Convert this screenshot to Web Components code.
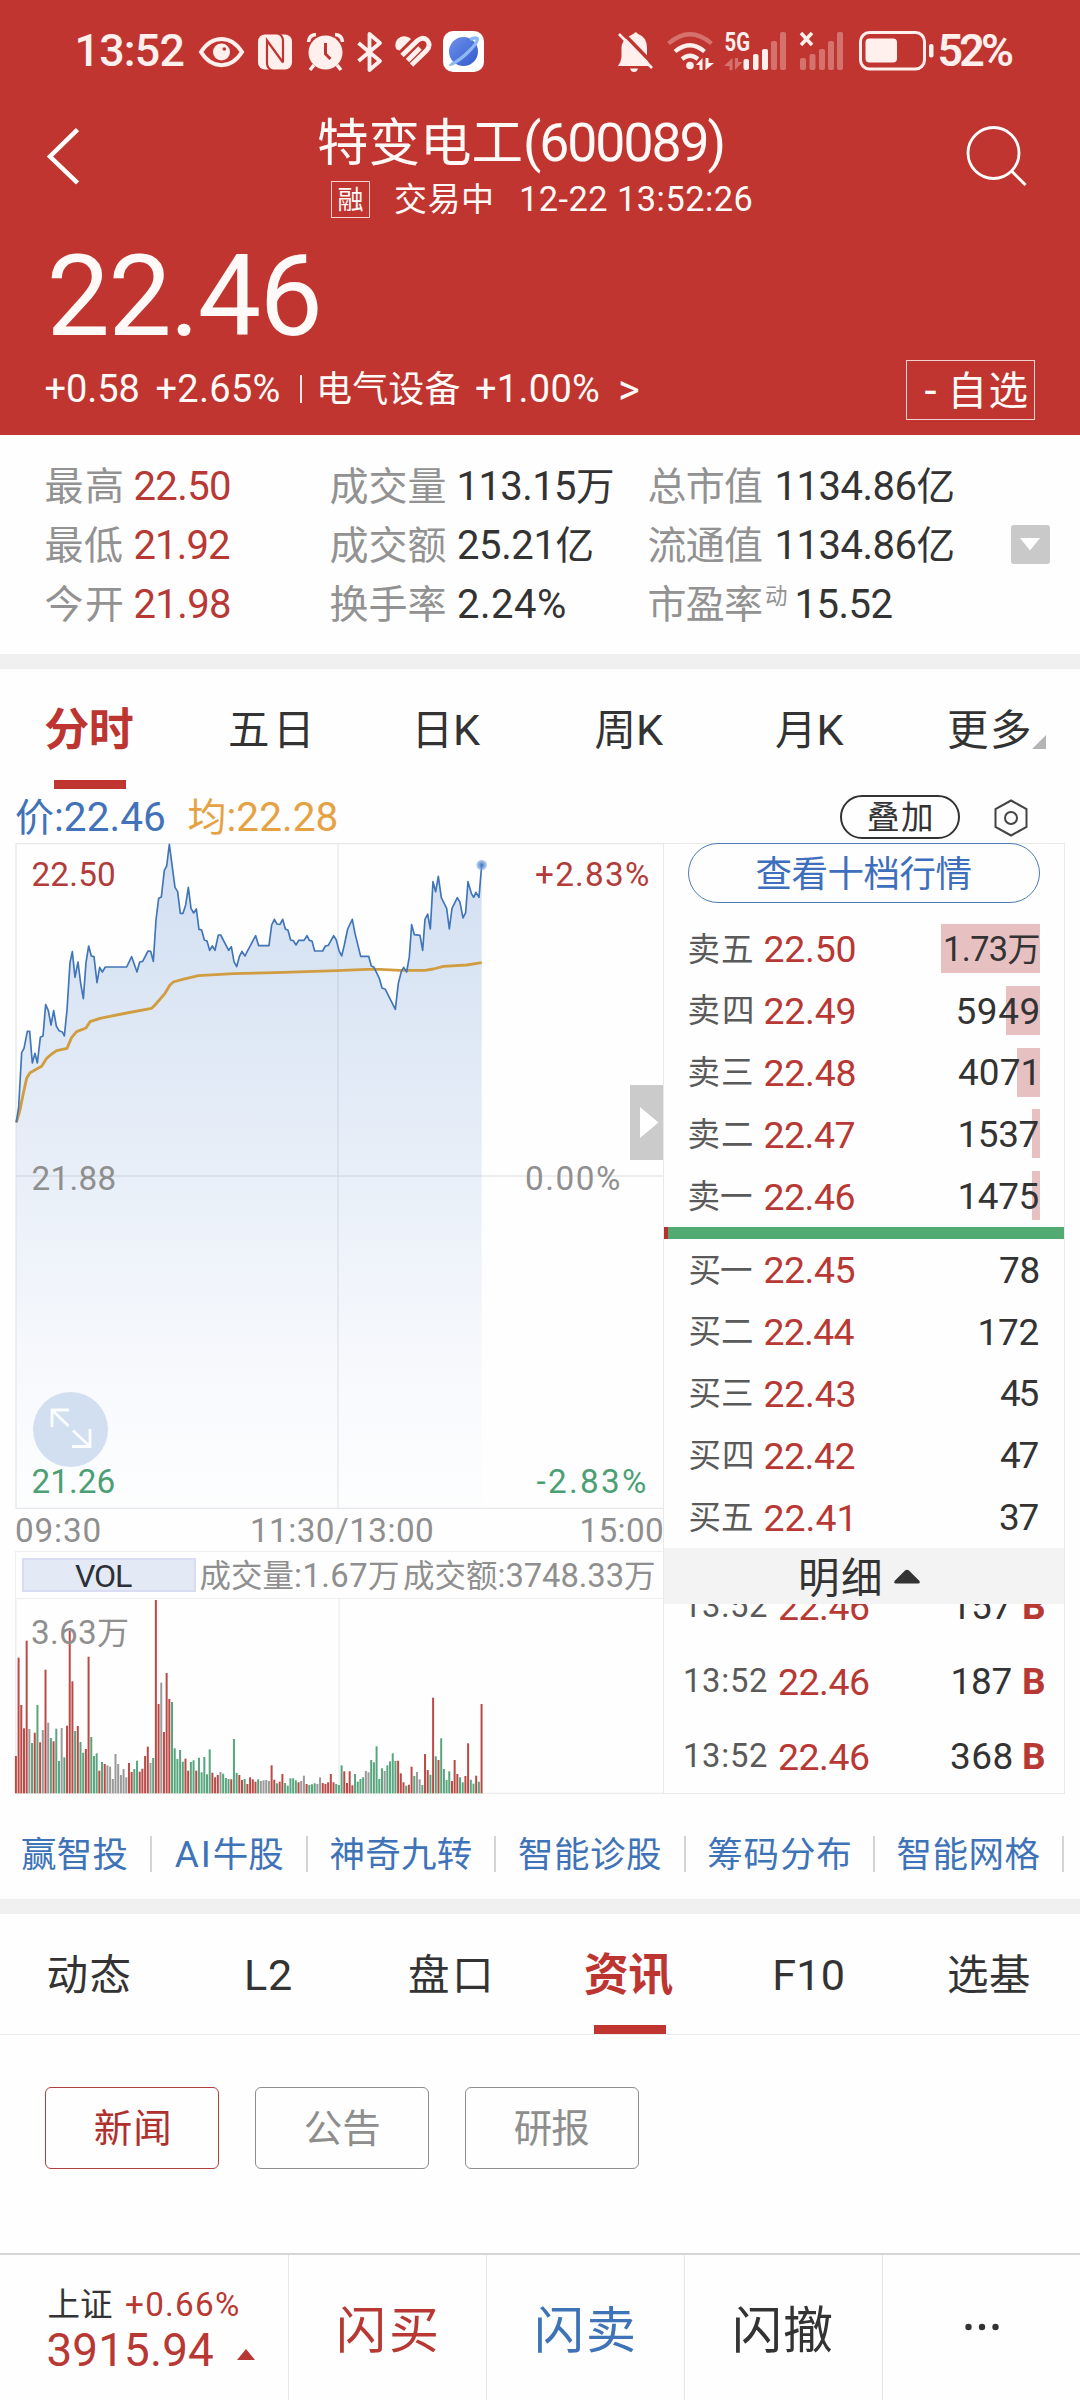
<!DOCTYPE html>
<html lang="zh-CN">
<head>
<meta charset="utf-8">
<title>特变电工(600089)</title>
<style>
html,body{margin:0;padding:0}
body{width:1080px;height:2400px;background:#fefefe;overflow:hidden;
  font-family:Roboto,"Noto Sans CJK SC",sans-serif;color:#333;
  --red:#b83834;--brand:#c0352f;--blue:#3f73b8;--grey:#929292}
</style>
</head>
<body>
<stock-page></stock-page>
<script>
const define = (name, html, setup) => {
  const tpl = document.createElement('template');
  tpl.innerHTML = html;
  customElements.define(name, class extends HTMLElement {
    connectedCallback() {
      if (this.shadowRoot) return;
      const root = this.attachShadow({ mode: 'open' });
      root.appendChild(tpl.content.cloneNode(true));
      if (setup) setup.call(this, root);
    }
  });
};

/* Text fitted to an ink width: t = text, s = size, w = width, b = weight, c = colour */
const FAMILY = 'Roboto,"Noto Sans CJK SC",sans-serif';
const LATIN = 1.04;
const ctx = document.createElement('canvas').getContext('2d');
const isCjk = ch => ch.charCodeAt(0) > 0x2e7f;
customElements.define('q-text', class extends HTMLElement {
  connectedCallback() {
    if (this.shadowRoot) return;
    const t = this.getAttribute('t'), s = +this.getAttribute('s'), w = +this.getAttribute('w');
    const weight = this.getAttribute('b') || 400, color = this.getAttribute('c');
    const runs = t.match(/[\u2e80-\uffff]+|[^\u2e80-\uffff]+/g);
    const hasCjk = [...t].some(isCjk), hasLatin = [...t].some(c => !isCjk(c));
    const size = c => isCjk(c) ? s : s * LATIN;
    const m = (str, sz) => { ctx.font = `${weight} ${sz}px ${FAMILY}`; return ctx.measureText(str); };
    let natural = 0;
    for (const r of runs) natural += m(r, size(r[0])).width;
    const f = m(t[0], size(t[0])), last = t[t.length - 1], l = m(last, size(last));
    const lsb = -f.actualBoundingBoxLeft, rsb = l.width - l.actualBoundingBoxRight;
    const count = [...t].filter((c, i) => i < t.length - 1 && (!hasLatin || !isCjk(c))).length;
    const ls = w && count ? (w + lsb + rsb - natural) / count : 0;
    const root = this.attachShadow({ mode: 'open' });
    root.innerHTML = `<style>
      :host{display:block;flex:none;white-space:pre;height:${s * 1.2}px;line-height:${s * 1.2}px;
        font-size:${hasCjk ? s : s * LATIN}px;font-weight:${weight};${color ? `color:${color};` : ''}
        width:${w || natural - lsb - rsb}px}
      .i{display:block;margin-left:${-lsb}px;position:relative;top:var(--dy,1.5px)}
      .l{font-size:${s * LATIN}px;letter-spacing:${ls}px}
      .k{letter-spacing:${hasLatin ? 0 : ls}px}
    </style><span class="i">${runs.map(r => `<span class="${isCjk(r[0]) ? 'k' : 'l'}">${r.replace('>', '&gt;')}</span>`).join('')}</span>`;
  }
});

define('status-bar', `
<style>
:host{display:flex;height:103px;align-items:center;color:#fff0ee}
svg{display:block;flex:none;overflow:visible}
.g{margin-left:auto}
</style>
<q-text t="13:52" s="43" w="106" b="500" style="margin-left:77.5px"></q-text>
<svg style="margin-left:15px" width="46" height="42" viewBox="199 31 46 42"><path d="M201 52C212 34.500 231 34.500 242 52C231 69.500 212 69.500 201 52Z" fill="none" stroke="#fff0ee" stroke-width="4"/><circle cx="221.500" cy="52" r="8.500" fill="#fff0ee"/><circle cx="224.300" cy="49" r="1.800" fill="#c0352f"/></svg>
<svg style="margin-left:13px" width="34" height="42" viewBox="258 31 34 42"><rect x="258" y="34.500" width="34" height="35" rx="7" fill="#fff0ee"/><path d="M272.500 70.500Q267 68.500 267 63V40.500L283 62.500M277 33Q283 35 283 41V62.500" fill="none" stroke="#c0352f" stroke-width="2.200"/></svg>
<svg style="margin-left:15px" width="38" height="42" viewBox="307 31 38 42"><circle cx="325.500" cy="52.500" r="17" fill="#fff0ee"/><path d="M325.500 43V54L330.500 59" fill="none" stroke="#c0352f" stroke-width="3"/><path d="M308.500 42Q309 35 316 34.500M335 34.500Q342 35 342.500 42M314 65L310 70M337 65L341 70" fill="none" stroke="#fff0ee" stroke-width="3.500"/></svg>
<svg style="margin-left:11px" width="28" height="42" viewBox="356 31 28 42"><path d="M358.500 43L380 61L369.500 70V34L380 43L358.500 61" fill="none" stroke="#fff0ee" stroke-width="3.800" stroke-linejoin="round"/></svg>
<svg style="margin-left:11px" width="38" height="42" viewBox="395 31 38 42"><path d="M395.500 47C394 37 405 33 411 39L399.500 50.500Q396 50 395.500 47Z" fill="#fff0ee"/><path d="M402 55.500L417 41Q422.500 36 427 40Q431.500 45 426.500 50.500L411.500 65M407.500 60.500L420 48" fill="none" stroke="#fff0ee" stroke-width="4.800"/></svg>
<svg style="margin-left:10px" width="42" height="42" viewBox="443 31 42 42"><defs><linearGradient id="b" x1="0" y1="0" x2="1" y2="1"><stop stop-color="#6d92ea"/><stop offset="1" stop-color="#3358cf"/></linearGradient></defs><rect x="443" y="31" width="41" height="41" rx="10" fill="#fff"/><circle cx="463.500" cy="51.500" r="14.500" fill="url(#b)"/><path d="M450 64Q452 66 465 55Q479 42 477 38.500Q475 37 470 39.500" fill="none" stroke="#8cb9f4" stroke-width="3.600"/></svg>
<svg class="g" width="36" height="42" viewBox="617 31 36 42"><path d="M633 33.500Q635 31 637 34Q646 37 646 48V57Q646 60 649 66H617Q620 62 620.500 57V47Q621 42 625 38Z" fill="#fff0ee"/><path d="M629 68.500H637Q636 72 633 72Q630 72 629 68.500Z" fill="#fff0ee"/><path d="M620 31L655 67" stroke="#c0352f" stroke-width="3.500"/><path d="M618 34L651 68" stroke="#fff0ee" stroke-width="2.600"/></svg>
<svg style="margin-left:13px" width="48" height="42" viewBox="666 31 48 42"><g fill="none" stroke="#fff0ee" stroke-width="4.200"><path d="M667.500 43.500Q689 25 710.500 43.500" opacity=".33"/><path d="M674 51.500Q689 39 703.500 51.500"/><path d="M681 59Q689 52.500 697 59"/></g><circle cx="689" cy="65.500" r="3.800" fill="#fff0ee"/><path d="M701.500 58V70H698.500V65H695L701.500 58ZM704.500 70V58H707.500V63H713L704.500 70Z" fill="#fff0ee"/></svg>
<svg style="margin-left:9px" width="63" height="42" viewBox="723 31 63 42"><text x="723.500" y="51" font-size="25" font-weight="700" textLength="25.500" lengthAdjust="spacingAndGlyphs" fill="#fff0ee" font-family="Roboto,sans-serif">5G</text><g fill="#fff0ee"><path d="M731.500 58V70H728.500V66H723L731.500 58ZM734 70V58H737V62H741.500L734 70Z" opacity=".33"/><rect x="742.500" y="59" width="5.500" height="11" rx="2"/><rect x="752" y="54" width="5.500" height="16" rx="2"/><rect x="761" y="49" width="6" height="21" rx="2"/><g opacity=".33"><rect x="770" y="41" width="6" height="29" rx="2"/><rect x="779" y="32" width="6" height="38" rx="2"/></g></g></svg>
<svg style="margin-left:12px" width="45" height="42" viewBox="798 31 45 42"><path d="M800 33L811 45M811 33L800 45" stroke="#fff0ee" stroke-width="3.500"/><g fill="#fff0ee" opacity=".33"><rect x="799" y="58" width="6" height="12" rx="2"/><rect x="808.500" y="54" width="6" height="16" rx="2"/><rect x="818" y="49" width="6" height="21" rx="2"/><rect x="827" y="41" width="6" height="29" rx="2"/><rect x="836" y="32" width="6" height="38" rx="2"/></g></svg>
<svg style="margin-left:15px" width="75" height="42" viewBox="858 31 75 42"><rect x="859.500" y="32.500" width="64" height="36.500" rx="9" fill="none" stroke="#fff0ee" stroke-width="3"/><rect x="864.500" y="38.500" width="31.500" height="24" rx="4" fill="#fff0ee"/><rect x="928" y="44" width="4.500" height="13.500" rx="2" fill="#fff0ee"/></svg>
<q-text t="52%" s="43" w="73.500" b="600" style="margin:0 67px 0 6px"></q-text>
`);

define('quote-header', `
<style>
:host{display:block;height:435px;background:var(--brand);color:#fffaf8;--dy:.6px}
.nav{display:flex;height:115px}
.nav svg{display:block;flex:none}
.mid{margin-left:239.500px;width:433px}
.title{height:78px;display:flex;align-items:center}
.sub{height:37px;display:flex;align-items:center;margin-left:12.500px}
.tag{box-sizing:border-box;width:39px;height:37px;border:1.500px solid #f3d2cd;display:flex;align-items:center;justify-content:center;--dy:1px}
.price{height:128px;padding-top:14px;display:flex;align-items:center;--dy:1.5px}
.row{display:flex;height:60px;align-items:center;--dy:1.4px}
.row>q-text,.bar{position:relative;top:-1px}
.bar{width:2px;height:28px;background:#fbeae8;margin:0 18px 0 20.500px}
.fav{box-sizing:border-box;width:129.500px;height:60px;border:1.500px solid #f3d2cd;margin-left:auto;margin-right:45px;display:flex;align-items:center;--dy:1.5px}
</style>
<status-bar></status-bar>
<div class="nav">
 <svg width="32" height="60" viewBox="47 125 32 60" style="margin:22px 0 0 47px"><path d="M77.500 129.500L50 156.500L77.500 183" fill="none" stroke="#fff" stroke-width="4.500"/></svg>
 <div class="mid">
  <div class="title"><q-text t="特变电工(600089)" s="51.500" w="403.500" style="margin-left:.5px"></q-text></div>
  <div class="sub"><div class="tag"><q-text t="融" s="26" w="24"></q-text></div>
   <q-text t="交易中" s="33" w="96" style="margin-left:25px"></q-text>
   <q-text t="12-22 13:52:26" s="33" w="230.500" style="margin-left:30px"></q-text></div>
 </div>
 <svg width="64" height="64" viewBox="965 124 64 64" style="margin:21px 0 0 213.500px"><circle cx="993.500" cy="153" r="25.500" fill="none" stroke="#fff" stroke-width="2.800"/><path d="M1011.500 171L1025.500 185" stroke="#fff" stroke-width="3"/></svg>
</div>
<div class="price"><q-text t="22.46" s="108.500" w="267" style="margin-left:51.500px"></q-text></div>
<div class="row">
 <q-text t="+0.58" s="36.500" w="93" style="margin-left:45.500px"></q-text>
 <q-text t="+2.65%" s="36.500" w="123" style="margin-left:18px"></q-text>
 <div class="bar"></div>
 <q-text t="电气设备" s="36" w="140.500"></q-text>
 <q-text t="+1.00%" s="36.500" w="123" style="margin-left:15.500px"></q-text>
 <q-text t=">" s="40" style="margin-left:21px"></q-text>
 <div class="fav"><q-text t="-" s="42" style="margin-left:18px"></q-text><q-text t="自选" s="39.500" w="74" style="margin-left:auto;margin-right:6.500px"></q-text></div>
</div>
`);

define('quote-stats', `
<style>
:host{display:flex;height:198px;padding-top:21px;border-bottom:15px solid #f0f0f0}
.c{display:flex;flex-direction:column;flex:none}
.c>div{display:flex;height:59px;align-items:center}
.k{color:var(--grey)}
.r{color:var(--red)}
.sup{margin:0 0 18px 4px}
.drop{width:39px;height:39px;border-radius:3px;background:#c9c9c9;margin:69px 0 0 auto;margin-right:30.500px;display:flex;align-items:center;justify-content:center}
</style>
<div class="c" style="margin-left:45.500px;width:285px">
 <div><q-text class="k" t="最高" s="39" w="76.500"></q-text><q-text class="r" t="22.50" s="38.500" w="95.500" style="margin-left:12.500px"></q-text></div>
 <div><q-text class="k" t="最低" s="39" w="76.500"></q-text><q-text class="r" t="21.92" s="38.500" w="95.500" style="margin-left:12.500px"></q-text></div>
 <div><q-text class="k" t="今开" s="39" w="76.500"></q-text><q-text class="r" t="21.98" s="38.500" w="95.500" style="margin-left:12.500px"></q-text></div>
</div>
<div class="c" style="width:318px">
 <div><q-text class="k" t="成交量" s="39" w="115"></q-text><q-text t="113.15万" s="38.500" w="153.500" style="margin-left:14px"></q-text></div>
 <div><q-text class="k" t="成交额" s="39" w="115"></q-text><q-text t="25.21亿" s="38.500" w="134.500" style="margin-left:12.500px"></q-text></div>
 <div><q-text class="k" t="换手率" s="39" w="115"></q-text><q-text t="2.24%" s="38.500" w="107" style="margin-left:12.500px"></q-text></div>
</div>
<div class="c" style="width:330px">
 <div><q-text class="k" t="总市值" s="39" w="113.500"></q-text><q-text t="1134.86亿" s="38.500" w="176" style="margin-left:15.500px"></q-text></div>
 <div><q-text class="k" t="流通值" s="39" w="113.500"></q-text><q-text t="1134.86亿" s="38.500" w="176" style="margin-left:15.500px"></q-text></div>
 <div><q-text class="k" t="市盈率" s="39" w="113.500"></q-text><q-text class="k sup" t="动" s="22.500" w="20.500"></q-text><q-text t="15.52" s="38.500" w="95" style="margin-left:11px"></q-text></div>
</div>
<div class="drop"><svg width="20" height="13" viewBox="0 0 20 13"><path d="M0 0H20L10 12.500Z" fill="#fff"/></svg></div>
`);

/* Row of equal tabs; "items" = label,width pairs, "active" = selected index */
define('tab-strip', `
<style>
:host{display:grid;grid-template-columns:repeat(6,1fr);height:120px}
.t{display:flex;flex-direction:column;align-items:center;height:120px;justify-content:space-between}
.t::before{content:"";height:9px}
.t i{display:block;width:72px;height:9px}
.t.on i{background:var(--brand)}
.t.on{color:#bd3530}
.m{display:flex;align-items:center;position:relative;left:-1px}
.m svg{position:absolute;right:-16px;bottom:5px}
</style><slot></slot>`, function (root) {
  const active = +this.getAttribute('active');
  const cells = this.getAttribute('items').split(';').map((it, i) => {
    const [label, w] = it.split(',');
    const on = i === active;
    return `<div class="t${on ? ' on' : ''}"><div class="m"><q-text t="${label}" s="${on ? 45 : 41.5}" w="${w}" b="${on ? 700 : 400}"></q-text>${label === '更多' ? '<svg width="14" height="14" viewBox="0 0 14 14"><path d="M14 0V14H0Z" fill="#b5b5b5"/></svg>' : ''}</div><i></i></div>`;
  }).join('');
  const box = document.createElement('template');
  box.innerHTML = cells;
  root.querySelector('slot').replaceWith(box.content);
});

define('chart-legend', `
<style>
:host{display:flex;height:54px;align-items:center;padding-left:16px}
.pill{box-sizing:border-box;width:120px;height:44px;border:2px solid #333;border-radius:22px;margin-left:auto;display:flex;align-items:center;justify-content:center;position:relative;top:1px}
svg{margin:3px 51.500px 0 33px}
</style>
<q-text t="价:22.46" s="39" w="148" c="#4272b8"></q-text>
<q-text t="均:22.28" s="39" w="148" c="#e5a244" style="margin-left:24.500px"></q-text>
<div class="pill"><q-text t="叠加" s="32.500" w="63"></q-text></div>
<svg width="36" height="38" viewBox="0 0 36 38"><path d="M18 1.500L33.500 10V28L18 36.500L2.500 28V10Z" fill="none" stroke="#444" stroke-width="2"/><circle cx="18" cy="19" r="6" fill="none" stroke="#444" stroke-width="2"/></svg>
`);

const PRICE = '49,877 56,830 65,668 72,655 82,604 89,604 97,699 105,670 112,699 121,622 129,618 137,524 145,542 153,585 161,542 169,588 177,602 187,606 193,618 201,540 210,398 217,365 225,442 234,396 242,460 250,506 258,398 266,348 274,378 282,380 291,458 299,412 307,426 316,411 380,411 395,380 411,426 419,396 428,394 444,363 452,364 460,394 468,270 476,205 484,201 493,121 500,108 508,43 525,172 533,185 541,250 549,250 557,225 565,172 573,235 581,249 589,237 597,298 605,300 613,330 621,333 629,361 637,348 645,361 655,315 662,315 686,361 694,350 702,395 710,410 718,380 726,364 735,378 743,362 767,317 776,347 807,347 815,285 823,268 831,282 840,283 848,268 856,297 864,301 872,330 880,332 888,345 896,331 912,331 921,317 928,331 936,333 944,363 968,363 976,348 985,346 1001,317 1009,330 1017,362 1025,378 1033,345 1043,297 1057,268 1065,310 1082,379 1106,379 1114,408 1122,412 1138,445 1146,474 1156,478 1186,538 1195,460 1204,424 1211,412 1220,426 1228,380 1235,284 1243,314 1260,316 1268,361 1275,268 1283,252 1291,297 1299,155 1307,185 1315,139 1324,203 1340,235 1348,297 1356,235 1372,203 1380,217 1389,264 1397,248 1404,155 1414,190 1421,202 1428,187 1437,202 1445,105';
const AVERAGE = '49,877 60,840 70,790 80,745 90,728 125,709 140,685 155,672 170,662 201,655 215,622 230,605 258,594 270,575 300,565 380,549 455,535 465,525 495,490 510,465 520,456 545,449 595,437 700,431 850,427 1010,422 1100,418 1140,418 1200,421 1275,421 1300,417 1330,409 1400,405 1445,398';

define('minute-chart', `
<style>
:host{display:block;position:relative;width:663px;height:666px}
svg{display:block}
q-text{position:absolute}
.exp{position:absolute;left:33px;top:549px}
.handle{position:absolute;left:630px;top:242px;width:33px;height:75px;background:#cbcbcb}
</style>
<svg width="663" height="666" viewBox="0 843 663 666">
 <defs><linearGradient id="f" gradientUnits="userSpaceOnUse" x1="0" y1="43" x2="0" y2="2037"><stop stop-color="#4c82cc" stop-opacity=".25"/><stop offset=".45" stop-color="#4c82cc" stop-opacity=".135"/><stop offset=".8" stop-color="#6c96dc" stop-opacity=".05"/><stop offset="1" stop-color="#8cb0ec" stop-opacity=".01"/></linearGradient>
 <radialGradient id="d"><stop stop-color="#3f73c0"/><stop offset=".45" stop-color="#5c8bd0" stop-opacity=".8"/><stop offset="1" stop-color="#8fb4e6" stop-opacity=".55"/></radialGradient></defs>
 <path d="M15.500 843.500H663M16 843V1509M338 843V1509M16 1176H663M15.500 1508.500H663" fill="none" stroke="#e6e8ea" stroke-width="1.300"/>
 <g transform="translate(0 830) scale(.33333)" fill="none" stroke-linejoin="round">
  <path id="area" fill="url(#f)"/>
  <polyline id="avg" stroke="#d09d40" stroke-width="8.500"/>
  <polyline id="line" stroke="#4075b8" stroke-width="5"/>
  <circle cx="1445" cy="105" r="16" fill="url(#d)"/>
 </g>
</svg>
<q-text t="22.50" s="32" w="81.500" c="#b23c3a" style="left:32.500px;top:11.500px"></q-text>
<q-text t="+2.83%" s="32" w="112" c="#b23c3a" style="left:536px;top:11.500px"></q-text>
<q-text t="21.88" s="32" w="82" c="#8f8f8f" style="left:32.500px;top:315px"></q-text>
<q-text t="0.00%" s="32" w="93" c="#8f8f8f" style="left:526px;top:315px"></q-text>
<svg class="exp" width="75" height="75" viewBox="33 1392 75 75"><circle cx="70.500" cy="1429.500" r="37.500" fill="#d1dff0"/><path d="M52 1427V1410H69M52 1410L68.500 1426M90 1429V1446.500H72M90 1446.500L73 1430.500" fill="none" stroke="#fbfdff" stroke-width="2.800"/></svg>
<q-text t="21.26" s="32" w="82" c="#4a9f74" style="left:32.500px;top:618px"></q-text>
<q-text t="-2.83%" s="32" w="108.500" c="#4a9f74" style="left:536.500px;top:618px"></q-text>
<div class="handle"><svg width="33" height="75"><path d="M10 22V53L28.500 37.500Z" fill="#fff"/></svg></div>
`, function (root) {
  root.getElementById('line').setAttribute('points', PRICE);
  root.getElementById('avg').setAttribute('points', AVERAGE);
  root.getElementById('area').setAttribute('d', 'M49,2037L' + PRICE.replace(/ /g, 'L') + 'L1445,2037Z');
});

/* Volume bars: top coordinate (base 625) and direction: r up, g down, x flat */
const VOLUME = '513r 218r 360r 430r 167r 432x 474g 443r 360g 472r 435x 254r 413x 459g 469r 431g 528g 429x 517g 422r 138r 289r 438g 423r 471g 503g 492r 215r 456g 513g 505g 557r 531g 537r 541x 545x 582x 507x 537x 570x 552x 577x 534r 561r 552g 527g 560r 551r 513r 485r 534x 519g 45r 357r 293x 441r 264r 342r 351g 490g 522g 495g 530g 521r 557r 531g 526g 557r 518g 562g 516g 568g 493g 563r 577r 570r 561x 566g 579g 582g 583r 462g 564g 570r 585r 582g 597r 577r 583r 590r 583g 588x 586x 585x 588x 541r 584r 595g 590r 567r 594g 602g 580g 580g 586g 592r 588x 572x 597r 600g 598g 595g 597x 577x 594r 597r 592r 567r 592r 597g 600g 541g 559r 594r 559r 601r 567g 590g 582g 577g 558x 562x 525g 532g 484g 582g 550g 558x 541g 529g 505g 528g 527r 565r 592r 602g 599r 545r 573g 561x 583x 600g 507r 555r 569g 338r 514g 525r 460g 552g 585g 559g 588r 525r 567r 577g 592g 573r 475r 584g 596g 572r 590g 357r';

define('volume-chart', `
<style>
:host{display:block;position:relative;width:663px}
.time{height:42px;display:flex;align-items:center;color:#8f8f8f}
.head{box-sizing:border-box;height:48px;display:flex;align-items:center;color:#8f8f8f;border:solid #efefef;border-width:1.500px 0 1.500px 1.500px;margin-left:15px;padding-left:5.500px}
.vol{box-sizing:border-box;width:174px;height:34px;background:#e4e9f6;border:2px solid #d9dcf3;display:flex;align-items:center;justify-content:center;color:#2d3038}
svg{display:block}
.max{position:absolute;left:32px;top:103px}
</style>
<div class="time"><q-text t="09:30" s="32" w="83.500" style="margin-left:16px"></q-text><q-text t="11:30/13:00" s="32" w="180" style="margin-left:152.500px"></q-text><q-text t="15:00" s="32" w="80.500" style="margin-left:149.500px"></q-text></div>
<div class="head"><div class="vol"><q-text t="VOL" s="31" w="57" style="margin-right:10px"></q-text></div><q-text t="成交量:1.67万" s="31.500" w="197.500" style="margin-left:5px"></q-text><q-text t="成交额:3748.33万" s="31.500" w="250" style="margin-left:6px"></q-text></div>
<svg width="663" height="195" viewBox="0 1599 663 195"><path d="M15.800 1599V1793.500H663M339 1599V1793" fill="none" stroke="#ececec" stroke-width="1.300"/><g id="bars"></g></svg>
<q-text class="max" t="3.63万" s="32" w="96" c="#8f8f8f"></q-text>
`, function (root) {
  const colors = { r: '#bb4a47', g: '#58a67e', x: '#9a9a9a' };
  root.getElementById('bars').innerHTML = VOLUME.split(' ').map((b, i) => {
    const y = 1585 + parseInt(b) / 3;
    return `<rect x="${(14.9 + i * 2.6917).toFixed(2)}" y="${y.toFixed(1)}" width="2" height="${(1793.3 - y).toFixed(1)}" fill="${colors[b.slice(-1)]}"/>`;
  }).join('');
});

define('order-book', `
<style>
:host{box-sizing:border-box;display:block;width:402px;height:951px;border:solid #e9e9e9;border-width:1px 1.500px 1.500px;background:#fefefe}
.ten{box-sizing:border-box;width:352px;height:60px;margin:-1px 0 14.700px 23.500px;border:1.500px solid #4b7ab6;border-radius:30px;display:flex;align-items:center;justify-content:center;color:#3e6fbd}
.row{display:flex;align-items:center;height:61.800px;padding:0 24px 0 25.500px}
.k{color:#5a5a5a}
.p{color:var(--red)}
.n{margin-left:auto;box-sizing:border-box;height:49px;width:112px;display:flex;align-items:center;justify-content:flex-end;padding-right:1.500px}
.ratio{height:12px;background:linear-gradient(90deg,#b5302e 4px,#52a971 4px)}
.detail{height:56px;background:#f3f3f3;display:flex;align-items:center;padding-left:137px;margin-top:.5px;--dy:2.5px}
.detail svg{margin-left:14px}
.ticks{height:188px;overflow:hidden;--dy:2px}
.tick{display:flex;align-items:center;height:75px;padding:0 19px 0 21px}
.tick:first-child{margin-top:-36.300px}
</style>
<div class="ten"><q-text t="查看十档行情" s="36.500" w="214"></q-text></div>
<div id="sell"></div><div class="ratio"></div><div id="buy"></div>
<div class="detail"><q-text t="明细" s="41.500" w="79"></q-text><svg width="26" height="15" viewBox="0 0 26 15"><path d="M11 1.500Q13 0 15 1.500L25 11.500Q27 14.500 24 14.500H2Q-1 14.500 1 11.500Z" fill="#333"/></svg></div>
<div class="ticks"></div>
`, function (root) {
  const row = ([k, p, n, w, bar]) => `<div class="row"><q-text class="k" t="${k}" s="32.5" w="62.5"></q-text><q-text class="p" t="${p}" s="36" w="${p.endsWith('1') ? 86 : 90}" style="margin-left:12.500px"></q-text><div class="n"${bar ? ` style="background:linear-gradient(270deg,#e7c0c2 ${bar}px,transparent ${bar}px)"` : ''}><q-text t="${n}" s="${/万/.test(n) ? 33 : 35.5}" w="${w}"${n.endsWith('1') ? ' style="margin-right:4px"' : ''}></q-text></div></div>`;
  root.getElementById('sell').innerHTML = [['卖五', '22.50', '1.73万', 93.5, 99], ['卖四', '22.49', '5949', 81, 34], ['卖三', '22.48', '4071', 76.5, 23], ['卖二', '22.47', '1537', 78, 8], ['卖一', '22.46', '1475', 78, 8]].map(row).join('');
  root.getElementById('buy').innerHTML = [['买一', '22.45', '78', 38.5], ['买二', '22.44', '172', 58], ['买三', '22.43', '45', 38.5], ['买四', '22.42', '47', 38.5], ['买五', '22.41', '37', 38.5]].map(row).join('');
  root.querySelector('.ticks').innerHTML = [['157', 58], ['187', 58], ['368', 60.5]].map(([n, w]) => `<div class="tick"><q-text class="k" t="13:52" s="31.5" w="82"></q-text><q-text class="p" t="22.46" s="36" w="90" style="margin-left:12px"></q-text><q-text t="${n}" s="35.5" w="${w}" style="margin-left:auto"></q-text><q-text class="p" t="B" s="35.5" w="21" b="700" style="margin-left:12.500px"></q-text></div>`).join('');
});

define('tool-links', `
<style>
:host{box-sizing:border-box;display:flex;height:105px;padding:15px 0 0 22px;align-items:center;color:var(--blue)}
i{flex:none;width:2px;height:36px;background:#d4d4d4;margin:0 22.600px}
</style>
<q-text t="赢智投" s="35.500" w="105.500"></q-text><i></i><q-text t="AI牛股" s="35.500" w="108.500"></q-text><i></i><q-text t="神奇九转" s="35.500" w="141.500"></q-text><i></i><q-text t="智能诊股" s="35.500" w="142"></q-text><i></i><q-text t="筹码分布" s="35.500" w="142"></q-text><i></i><q-text t="智能网格" s="35.500" w="142"></q-text><i></i>
`);

define('news-filter', `
<style>
:host{display:flex;gap:36px;margin:52px 0 0 45px;color:#8e8e8e;--dy:1px}
div{box-sizing:border-box;width:174px;height:82px;border:1.500px solid #8e8e8e;border-radius:6px;display:flex;align-items:center;justify-content:center}
.on{border-color:#b0403e;color:#b0302d}
</style>
<div class="on"><q-text t="新闻" s="38.500" w="74.500"></q-text></div><div><q-text t="公告" s="38.500" w="74.500"></q-text></div><div><q-text t="研报" s="38.500" w="74.500"></q-text></div>
`);

define('trade-bar', `
<style>
:host{box-sizing:border-box;display:grid;grid-template-columns:288px repeat(4,198px);height:147px;margin-top:auto;border-top:2px solid #d6d6d6}
.idx{--dy:-.5px;box-sizing:border-box;padding:28px 0 0 48.500px;color:var(--red)}
.line{display:flex;align-items:center;height:46px}
.b{display:flex;align-items:center;justify-content:center;border-left:1.500px solid #e6e6e6;box-sizing:border-box;padding:3px 0 0 1px}
</style>
<div class="idx"><div class="line"><q-text t="上证" s="32.500" w="63.500" c="#333"></q-text><q-text t="+0.66%" s="32" w="112" style="margin-left:14px"></q-text></div>
<div class="line"><q-text t="3915.94" s="44" w="164.500" style="--dy:-1px"></q-text><svg width="18" height="11" viewBox="0 0 18 11" style="margin:4px 0 0 24px"><path d="M9 0L18 11H0Z" fill="#b83834"/></svg></div></div>
<div class="b"><q-text t="闪买" s="50" w="96" c="#b83834"></q-text></div>
<div class="b"><q-text t="闪卖" s="50" w="96" c="#3f73b8"></q-text></div>
<div class="b"><q-text t="闪撤" s="50" w="96"></q-text></div>
<div class="b"><svg width="36" height="8" style="margin-bottom:4px"><g fill="#333"><circle cx="4.500" cy="4" r="3.200"/><circle cx="18" cy="4" r="3.200"/><circle cx="31.500" cy="4" r="3.200"/></g></svg></div>
`);

define('stock-page', `
<style>
:host{display:flex;flex-direction:column;width:1080px;height:2400px}
.market{display:flex;height:951px;flex:none}
.band{height:15px;background:#f0f0f0;flex:none}
.under{border-bottom:1.500px solid #ececec}
</style>
<quote-header></quote-header>
<quote-stats></quote-stats>
<tab-strip active="0" items="分时,87.5;五日,78;日K,61;周K,67;月K,66;更多,82"></tab-strip>
<chart-legend></chart-legend>
<div class="market"><div><minute-chart></minute-chart><volume-chart></volume-chart></div><order-book></order-book></div>
<tool-links></tool-links>
<div class="band"></div>
<tab-strip class="under" active="3" items="动态,81;L2,44;盘口,80;资讯,88.5;F10,67.5;选基,82"></tab-strip>
<news-filter></news-filter>
<trade-bar></trade-bar>
`);
</script>
</body>
</html>
